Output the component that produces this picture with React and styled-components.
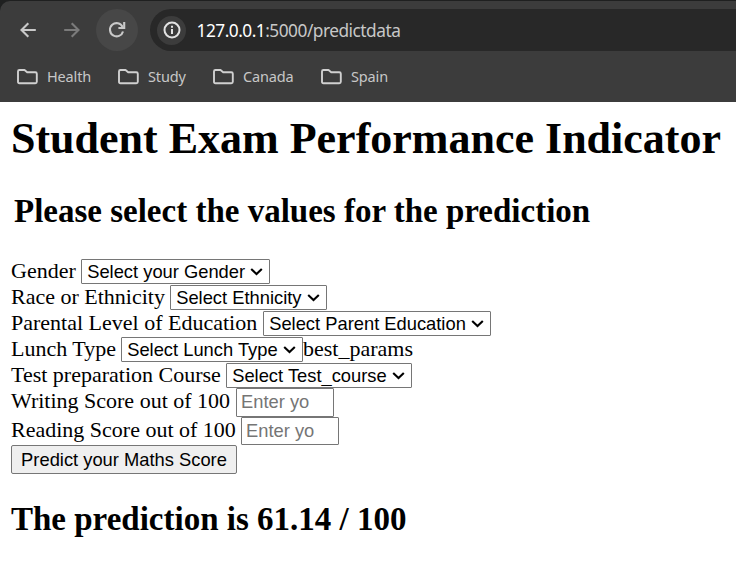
import React from "react";
import styled, { createGlobalStyle } from "styled-components";

const GlobalStyle = createGlobalStyle`
  * { box-sizing: border-box; }
  html, body { margin: 0; background: #fff; overflow: hidden; }
`;

const Browser = styled.div`
  height: 566px;
  background: #fff;
  color: #000;
  font-family: "Liberation Serif", serif;
`;

const Chrome = styled.header`
  height: 102px;
  background: #1f2020;
  padding-top: 1px;
  font-family: "Noto Sans", "Open Sans", sans-serif;
`;

const ChromePanel = styled.div`
  height: 101px;
  background: #3c3c3c;
  border-top-left-radius: 10px;
  padding-top: 8px;
`;

const Toolbar = styled.div`
  display: flex;
  align-items: center;
  height: 42px;
  padding-left: 7px;
`;

const NavButton = styled.button`
  display: grid;
  place-items: center;
  width: 42px;
  height: 42px;
  margin: 0 ${(p) => p.$gap || 0}px 0 0;
  padding: 0;
  border: 0;
  border-radius: 50%;
  background: ${(p) => (p.$active ? "#474747" : "transparent")};
  color: ${(p) => (p.$muted ? "#7b7b7b" : "#c9c9c9")};
`;

const AddressBar = styled.div`
  display: flex;
  align-items: center;
  flex: 1;
  height: 42px;
  padding-left: 7px;
  border-radius: 21px 0 0 21px;
  background: #282828;
`;

const SiteInfo = styled.span`
  display: grid;
  place-items: center;
  width: 29px;
  height: 29px;
  margin-right: 10.5px;
  border-radius: 50%;
  background: #3c3c3c;
  color: #e3e3e3;
`;

const Address = styled.span`
  padding-top: 2px;
  font-size: 17.3px;
  line-height: 26px;
  letter-spacing: -0.5px;
  color: #c7c7c7;
  white-space: nowrap;
`;

const Host = styled.span`
  color: #fff;
`;

const Bookmarks = styled.nav`
  display: flex;
  height: 50px;
  padding: 0 0 0 17px;
  align-items: center;
`;

const Bookmark = styled.span`
  display: flex;
  align-items: center;
  gap: 9px;
  width: ${(p) => p.$width}px;
  font-size: 14.5px;
  line-height: 20px;
  letter-spacing: -0.15px;
  color: #c7c7c7;
  white-space: nowrap;
`;

const Page = styled.main`
  padding: 0 0 0 11px;
`;

const Title = styled.h1`
  margin: 0;
  padding-top: 11px;
  font-size: 44px;
  line-height: 51px;
  white-space: nowrap;
`;

const Subtitle = styled.h2`
  margin: ${(p) => p.$top}px 0 0 ${(p) => p.$indent || 0}px;
  font-size: 33px;
  line-height: 38px;
  white-space: nowrap;
`;

const Form = styled.form`
  margin-top: 29px;
`;

const Row = styled.div`
  display: flex;
  align-items: flex-start;
  height: ${(p) => p.$height || 26}px;
  font-size: 22px;
  line-height: ${(p) => p.$line || 23}px;
`;

const Label = styled.label`
  flex: none;
  width: ${(p) => p.$width}px;
  white-space: nowrap;
`;

const SelectBox = styled.span`
  display: grid;
  align-items: center;
  flex: none;
  width: ${(p) => p.$width}px;
  height: 25px;

  & > * { grid-area: 1 / 1; }
  & > svg { justify-self: end; margin-right: 6px; pointer-events: none; }
`;

const Select = styled.select`
  appearance: none;
  width: 100%;
  height: 25px;
  margin: 0;
  padding: 0 0 0 5.2px;
  border: 1px solid #767676;
  border-radius: 1px;
  background: #fff;
  color: #000;
  font: 18.33px "Liberation Sans", sans-serif;
`;

const ScoreInput = styled.input`
  width: 98px;
  height: ${(p) => p.$height}px;
  margin: 0;
  padding: 0 18px 1px 4px;
  border: 1px solid #767676;
  border-radius: 1px;
  background: #fff;
  font: 18.33px "Liberation Sans", sans-serif;
  &::placeholder { color: #757575; }
`;

const Submit = styled.button`
  display: block;
  width: 226px;
  height: 29px;
  padding: 0;
  border: 1px solid #767676;
  border-radius: 2px;
  background: #efefef;
  color: #000;
  font: 18.33px "Liberation Sans", sans-serif;
  white-space: nowrap;
`;

const Stroke = ({ size, children, width = 2 }) => (
  <svg width={size} height={size} viewBox={`0 0 ${size} ${size}`} fill="none" stroke="currentColor" strokeWidth={width}>
    {children}
  </svg>
);

const Folder = () => (
  <svg width="21" height="18" viewBox="0 0 21 18" fill="none" stroke="#d0d0d0" strokeWidth="1.9" strokeLinejoin="round">
    <path d="M2.4 3H7.5L10.2 5.3H18.3Q19.8 5.3 19.8 6.8V14.7Q19.8 16.2 18.3 16.2H2.4Q1 16.2 1 14.7V4.4Q1 3 2.4 3Z" />
  </svg>
);

const Chevron = () => (
  <svg width="14" height="10" viewBox="0 0 14 10" fill="none" stroke="#000" strokeWidth="2.1">
    <path d="M1.2 2L6.5 7L11.8 2" />
  </svg>
);

const bookmarks = [
  { name: "Health", width: 101 },
  { name: "Study", width: 95 },
  { name: "Canada", width: 108 },
  { name: "Spain", width: 80 },
];

const selects = [
  { label: "Gender", labelWidth: 70, option: "Select your Gender", width: 189 },
  { label: "Race or Ethnicity", labelWidth: 159, option: "Select Ethnicity", width: 157 },
  { label: "Parental Level of Education", labelWidth: 252, option: "Select Parent Education", width: 228 },
  { label: "Lunch Type", labelWidth: 110, option: "Select Lunch Type", width: 182, after: "best_params" },
  { label: "Test preparation Course", labelWidth: 215, option: "Select Test_course", width: 186, height: 25 },
];

export default function App() {
  return (
    <Browser>
      <GlobalStyle />
      <Chrome>
        <ChromePanel>
          <Toolbar>
            <NavButton $gap={2} aria-label="Back">
              <Stroke size={18} width={2.1}><path d="M16.8 9H3M9.3 2.2L2.5 9L9.3 15.8" /></Stroke>
            </NavButton>
            <NavButton $gap={3} $muted aria-label="Forward">
              <Stroke size={18} width={2.1}><path d="M1.2 9H15M8.7 2.2L15.5 9L8.7 15.8" /></Stroke>
            </NavButton>
            <NavButton $gap={12} $active aria-label="Reload">
              <Stroke size={18} width={2.1}>
                <path d="M14.6 6A6.6 6.6 0 1 0 15 10.4" />
                <path d="M16.2 1V7H10.4" />
              </Stroke>
            </NavButton>
            <AddressBar>
              <SiteInfo>
                <Stroke size={18}>
                  <circle cx="9" cy="9" r="7.5" />
                  <path d="M9 8V13M9 4.8V6.8" />
                </Stroke>
              </SiteInfo>
              <Address><Host>127.0.0.1</Host>:5000/predictdata</Address>
            </AddressBar>
          </Toolbar>
          <Bookmarks>
            {bookmarks.map((b) => (
              <Bookmark key={b.name} $width={b.width}><Folder />{b.name}</Bookmark>
            ))}
          </Bookmarks>
        </ChromePanel>
      </Chrome>
      <Page>
        <Title>Student Exam Performance Indicator</Title>
        <Subtitle $top={28} $indent={3}>Please select the values for the prediction</Subtitle>
        <Form>
          {selects.map((s) => (
            <Row key={s.label} $height={s.height}>
              <Label $width={s.labelWidth}>{s.label}</Label>
              <SelectBox $width={s.width}>
                <Select><option>{s.option}</option></Select>
                <Chevron />
              </SelectBox>
              {s.after}
            </Row>
          ))}
          <Row $height={29} $line={25}>
            <Label $width={225}>Writing Score out of 100</Label>
            <ScoreInput $height={29} placeholder="Enter yo" />
          </Row>
          <Row $height={28} $line={25}>
            <Label $width={230}>Reading Score out of 100</Label>
            <ScoreInput $height={28} placeholder="Enter yo" />
          </Row>
          <Submit type="button">Predict your Maths Score</Submit>
        </Form>
        <Subtitle $top={26}>The prediction is 61.14 / 100</Subtitle>
      </Page>
    </Browser>
  );
}
